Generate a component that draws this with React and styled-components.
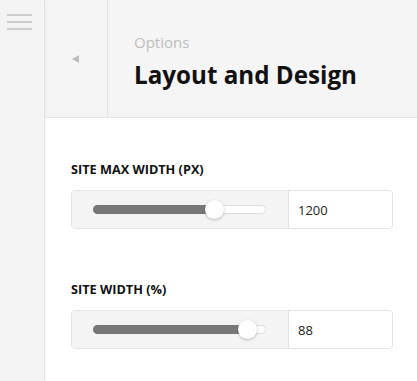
import React from "react";
import styled, { createGlobalStyle } from "styled-components";

const Global = createGlobalStyle`
  html, body { margin: 0; padding: 0; background: #fff; }
  body { font-family: "Open Sans", "Noto Sans", sans-serif; }
  * { box-sizing: border-box; }
`;

const Shell = styled.div`
  display: flex;
  height: 100vh;
  overflow: hidden;
`;

const Sidebar = styled.aside`
  width: 45px;
  flex: none;
  background: #f4f4f4;
  border-right: 1px solid #e2e2e2;
  box-shadow: 1px 0 4px rgba(0, 0, 0, 0.04);
  padding: 14px 0 0 7px;
  position: relative;
  z-index: 1;
`;

const Burger = styled.div`
  width: 25px;
  display: flex;
  flex-direction: column;
  gap: 5px;
  & > span {
    display: block;
    height: 2px;
    background: #cdcdcd;
  }
`;

const Main = styled.main`
  flex: 1;
  display: flex;
  flex-direction: column;
  min-width: 0;
`;

const Header = styled.header`
  height: 118px;
  flex: none;
  display: flex;
  background: #f5f5f5;
  border-bottom: 1px solid #e4e4e4;
`;

const BackCol = styled.div`
  width: 63px;
  flex: none;
  border-right: 1px solid #e2e2e2;
  display: flex;
  align-items: center;
  justify-content: center;
  padding-top: 1px;
`;

const Tri = styled.span`
  width: 0;
  height: 0;
  border-top: 4px solid transparent;
  border-bottom: 4px solid transparent;
  border-right: 7px solid #bdbdbd;
  margin-left: -1px;
`;

const TitleCol = styled.div`
  padding: 32px 0 0 26px;
  display: flex;
  flex-direction: column;
`;

const Crumb = styled.div`
  font-size: 15px;
  color: #bdbdbd;
  line-height: 20px;
`;

const Title = styled.h1`
  margin: 8px 0 0;
  font-size: 24.2px;
  font-weight: 700;
  color: #111;
  line-height: 30px;
`;

const Content = styled.section`
  padding: 43px 24px 0 26px;
  display: flex;
  flex-direction: column;
  gap: 52px;
`;

const Field = styled.div`
  display: flex;
  flex-direction: column;
  gap: 13px;
`;

const Label = styled.label`
  font-size: 12.7px;
  font-weight: 700;
  color: #111;
  line-height: 16px;
`;

const Control = styled.div`
  display: flex;
  height: 39px;
  border: 1px solid #e3e3e3;
  border-radius: 4px;
  overflow: hidden;
`;

const SliderPane = styled.div`
  width: 217px;
  flex: none;
  background: #f4f4f4;
  border-right: 1px solid #e3e3e3;
  display: flex;
  align-items: center;
  padding: 0 22px 0 21px;
`;

const Track = styled.div`
  position: relative;
  flex: 1;
  height: 9px;
  border-radius: 5px;
  background: #fff;
  border: 1px solid #dedede;
`;

const Fill = styled.div`
  position: absolute;
  left: -1px;
  top: -1px;
  bottom: -1px;
  border-radius: 5px;
  background: #777;
`;

const Thumb = styled.div`
  position: absolute;
  top: 50%;
  width: 19px;
  height: 19px;
  margin: -9.5px 0 0 -9.5px;
  border-radius: 50%;
  background: #fff;
  box-shadow: 0 1px 3px rgba(0, 0, 0, 0.25);
`;

const Input = styled.input`
  flex: 1;
  min-width: 0;
  border: none;
  outline: none;
  background: #fff;
  padding: 0 0 0 9px;
  font-family: "Open Sans", "Noto Sans", sans-serif;
  font-size: 13px;
  color: #222;
`;

function SliderField({ label, value, frac }) {
  const pos = `calc(9px + ${frac} * (100% - 16px))`;
  return (
    <Field>
      <Label>{label}</Label>
      <Control>
        <SliderPane>
          <Track>
            <Fill style={{ width: pos }} />
            <Thumb style={{ left: pos }} />
          </Track>
        </SliderPane>
        <Input defaultValue={value} />
      </Control>
    </Field>
  );
}

export default function App() {
  return (
    <>
      <Global />
      <Shell>
        <Sidebar>
          <Burger>
            <span />
            <span />
            <span />
          </Burger>
        </Sidebar>
        <Main>
          <Header>
            <BackCol>
              <Tri />
            </BackCol>
            <TitleCol>
              <Crumb>Options</Crumb>
              <Title>Layout and Design</Title>
            </TitleCol>
          </Header>
          <Content>
            <SliderField label="SITE MAX WIDTH (PX)" value="1200" frac={0.72} />
            <SliderField label="SITE WIDTH (%)" value="88" frac={0.935} />
          </Content>
        </Main>
      </Shell>
    </>
  );
}
